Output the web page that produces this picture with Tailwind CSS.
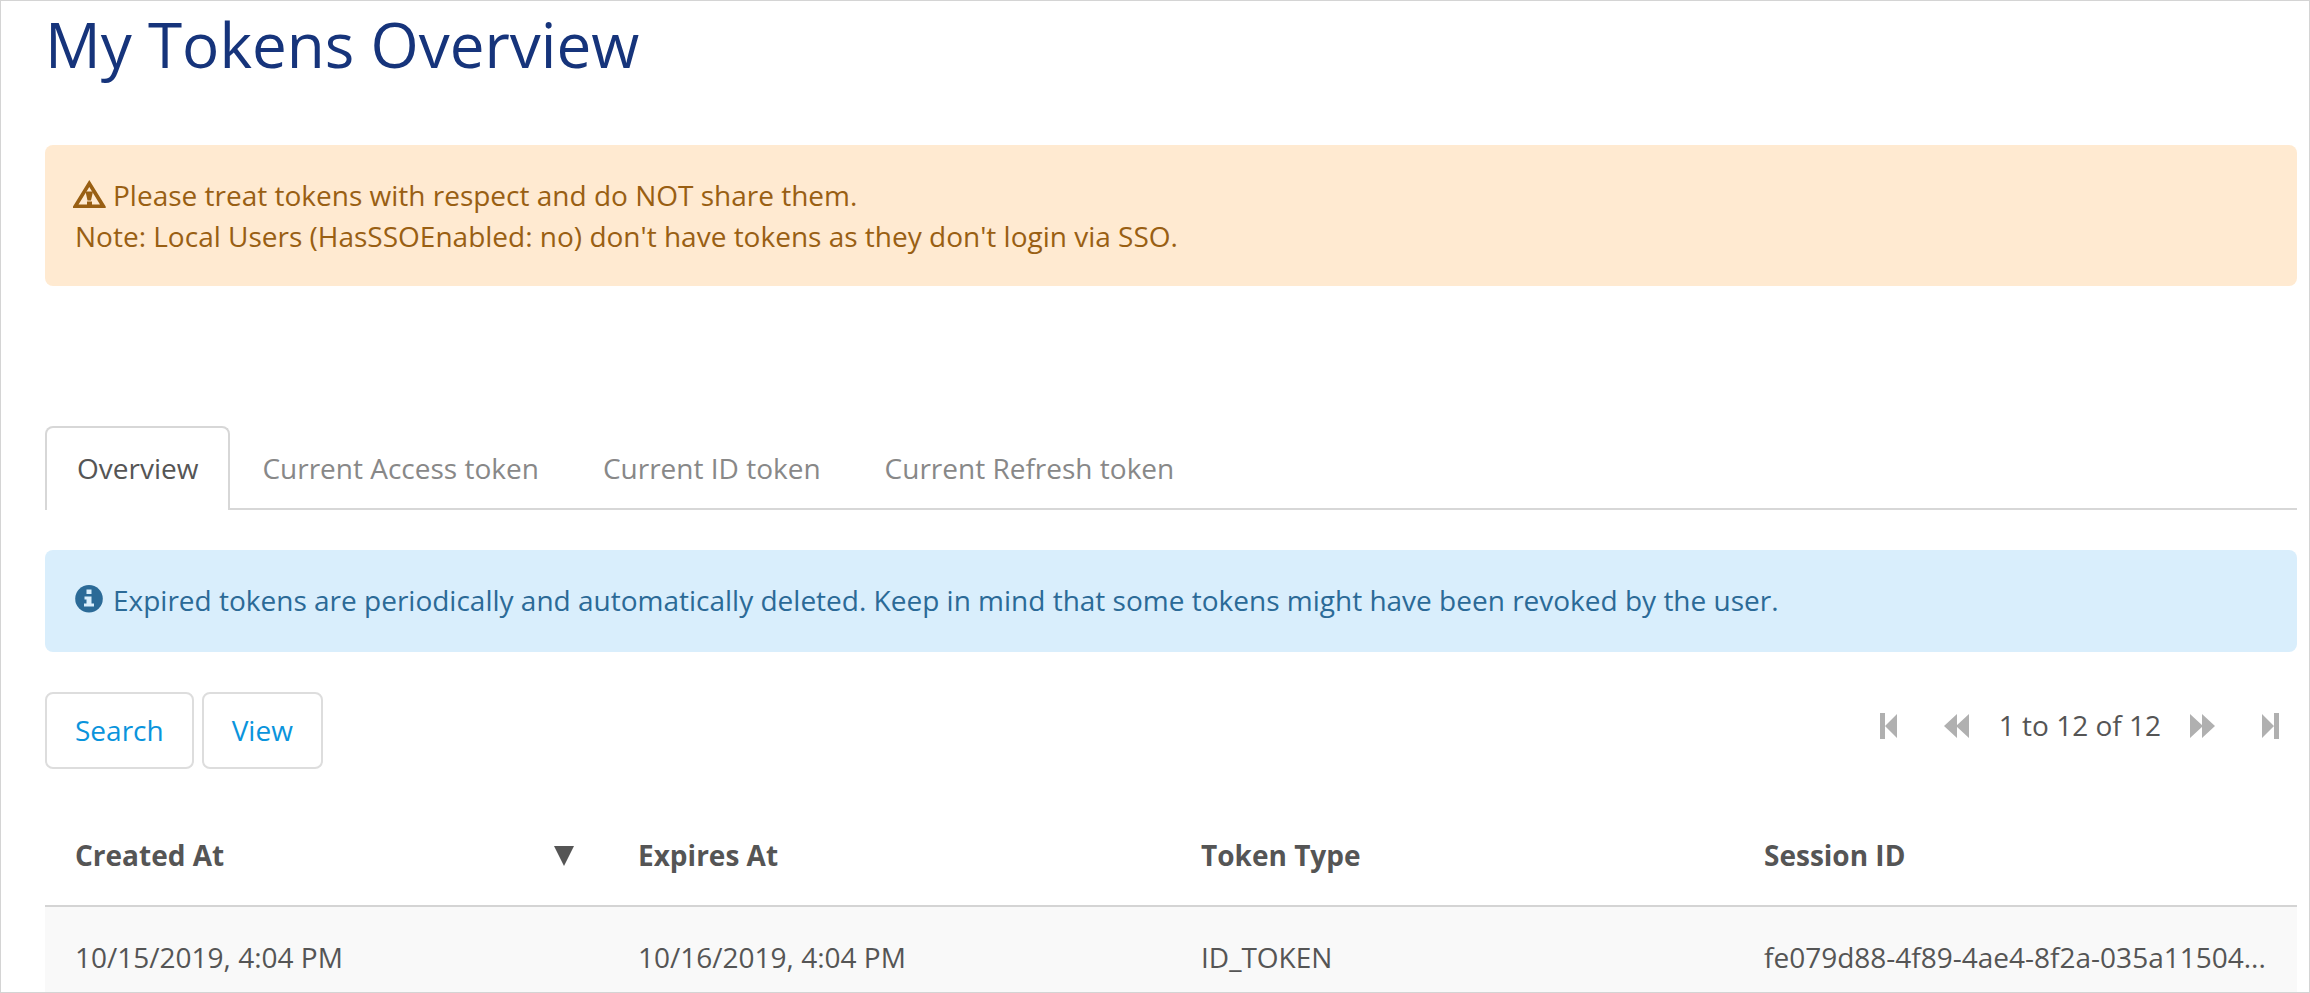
<!DOCTYPE html>
<html lang="en">
<head>
<meta charset="utf-8">
<meta name="viewport" content="width=device-width, initial-scale=1">
<title>My Tokens Overview</title>
<script src="https://cdn.jsdelivr.net/npm/@tailwindcss/browser@4"></script>
</head>
<body class="h-screen overflow-hidden border border-[#d4d4d4] bg-white font-['Open_Sans',sans-serif] text-[28px] leading-[41px] text-[#555]">
<main class="pr-3 pl-11">
  <h1 class="text-[62px] leading-[86px] text-[#16347b]">My Tokens Overview</h1>

  <div role="alert" class="mt-[58px] rounded-lg bg-[#ffead1] px-[30px] pt-[30px] pb-[29px] text-[#995f13]">
    <p class="flex items-start gap-2">
      <svg class="-ml-0.5 mt-[3px] h-8 w-8 shrink-0 overflow-visible" viewBox="0 0 32 32" aria-hidden="true">
        <path fill="currentColor" fill-rule="evenodd" d="M16.300 2 L32.700 28.500 V30 H0 V28.500 Z M16.300 9 L5.500 26.500 H27 Z"/>
        <path fill="currentColor" d="M12.500 13.500 H20 L18 22.500 H14.500 Z M14 23.500 H19 V27.500 H14 Z"/>
      </svg>
      <span>Please treat tokens with respect and do NOT share them.</span>
    </p>
    <p>Note: Local Users (HasSSOEnabled: no) don't have tokens as they don't login via SSO.</p>
  </div>

  <div role="tablist" class="mt-[140px] flex border-b-2 border-[#d7d7d7]">
    <button role="tab" aria-selected="true" class="-mb-0.5 rounded-t-lg border-2 border-b-0 border-[#d7d7d7] bg-white px-[30px] pt-5 pb-[21px]">Overview</button>
    <button role="tab" aria-selected="false" class="px-8 pt-[22px] pb-[19px] text-[#888]">Current Access token</button>
    <button role="tab" aria-selected="false" class="px-8 pt-[22px] pb-[19px] text-[#888]">Current ID token</button>
    <button role="tab" aria-selected="false" class="px-8 pt-[22px] pb-[19px] text-[#888]">Current Refresh token</button>
  </div>

  <div role="status" class="mt-10 flex items-start gap-2 rounded-lg bg-[#d9eefc] px-[30px] pt-[30px] pb-[31px] text-[#2b6a97]">
    <svg class="mt-[5px] h-7.5 w-7.5 shrink-0" viewBox="0 0 30 30" aria-hidden="true">
      <circle cx="14" cy="13.800" r="13.800" fill="currentColor"/>
      <path fill="#d9eefc" d="M11.500 4.500 H16.500 V9 H11.500 Z M9.500 11.500 H16.500 V18.500 H19 V21.500 H9 V18.500 H11.500 V14.500 H9.500 Z"/>
    </svg>
    <span>Expired tokens are periodically and automatically deleted. Keep in mind that some tokens might have been revoked by the user.</span>
  </div>

  <div class="mt-10 flex items-start justify-between">
    <div class="flex gap-2 text-[#0a94dc]">
      <button class="rounded-lg border-2 border-[#ddd] px-7 py-4">Search</button>
      <button class="rounded-lg border-2 border-[#ddd] px-7 py-4">View</button>
    </div>
    <nav aria-label="Pages" class="flex items-center pt-[13px] pr-[18px] text-[#b0b0b0]">
      <button aria-label="First page"><svg class="h-7 w-[17px]" viewBox="0 0 17 28" fill="currentColor"><path d="M0 1h5v26H0zM5 14 17 2v24z"/></svg></button>
      <button aria-label="Previous page" class="ml-[47px]"><svg class="h-7 w-[25px]" viewBox="0 0 25 28" fill="currentColor"><path d="M0 14 13 2v24zM12 14 25 2v24z"/></svg></button>
      <span class="mr-[29px] ml-[30px] text-[#555]">1 to 12 of 12</span>
      <button aria-label="Next page"><svg class="h-7 w-[25px]" viewBox="0 0 25 28" fill="currentColor"><path d="M25 14 12 2v24zM13 14 0 2v24z"/></svg></button>
      <button aria-label="Last page" class="ml-[47px]"><svg class="h-7 w-[17px]" viewBox="0 0 17 28" fill="currentColor"><path d="M12 1h5v26h-5zM12 14 0 2v24z"/></svg></button>
    </nav>
  </div>

  <table class="mt-9 w-full table-fixed text-left">
    <thead>
      <tr class="border-b-2 border-[#d4d4d4]">
        <th aria-sort="descending" class="px-[30px] pt-[30px] pb-[29px]">
          <div class="flex items-center justify-between pr-1">
            <span>Created At</span>
            <svg class="h-5 w-5" viewBox="0 0 20 20" fill="currentColor" aria-hidden="true"><path d="M0 0h20L10 20z"/></svg>
          </div>
        </th>
        <th class="px-[30px] pt-[30px] pb-[29px]">Expires At</th>
        <th class="px-[30px] pt-[30px] pb-[29px]">Token Type</th>
        <th class="px-[30px] pt-[30px] pb-[29px]">Session ID</th>
      </tr>
    </thead>
    <tbody>
      <tr class="bg-[#f9f9f9]">
        <td class="px-[30px] py-[30px]">10/15/2019, 4:04 PM</td>
        <td class="px-[30px] py-[30px]">10/16/2019, 4:04 PM</td>
        <td class="px-[30px] py-[30px]">ID_TOKEN</td>
        <td class="truncate px-[30px] py-[30px]">fe079d88-4f89-4ae4-8f2a-035a11504...</td>
      </tr>
    </tbody>
  </table>
</main>
</body>
</html>
